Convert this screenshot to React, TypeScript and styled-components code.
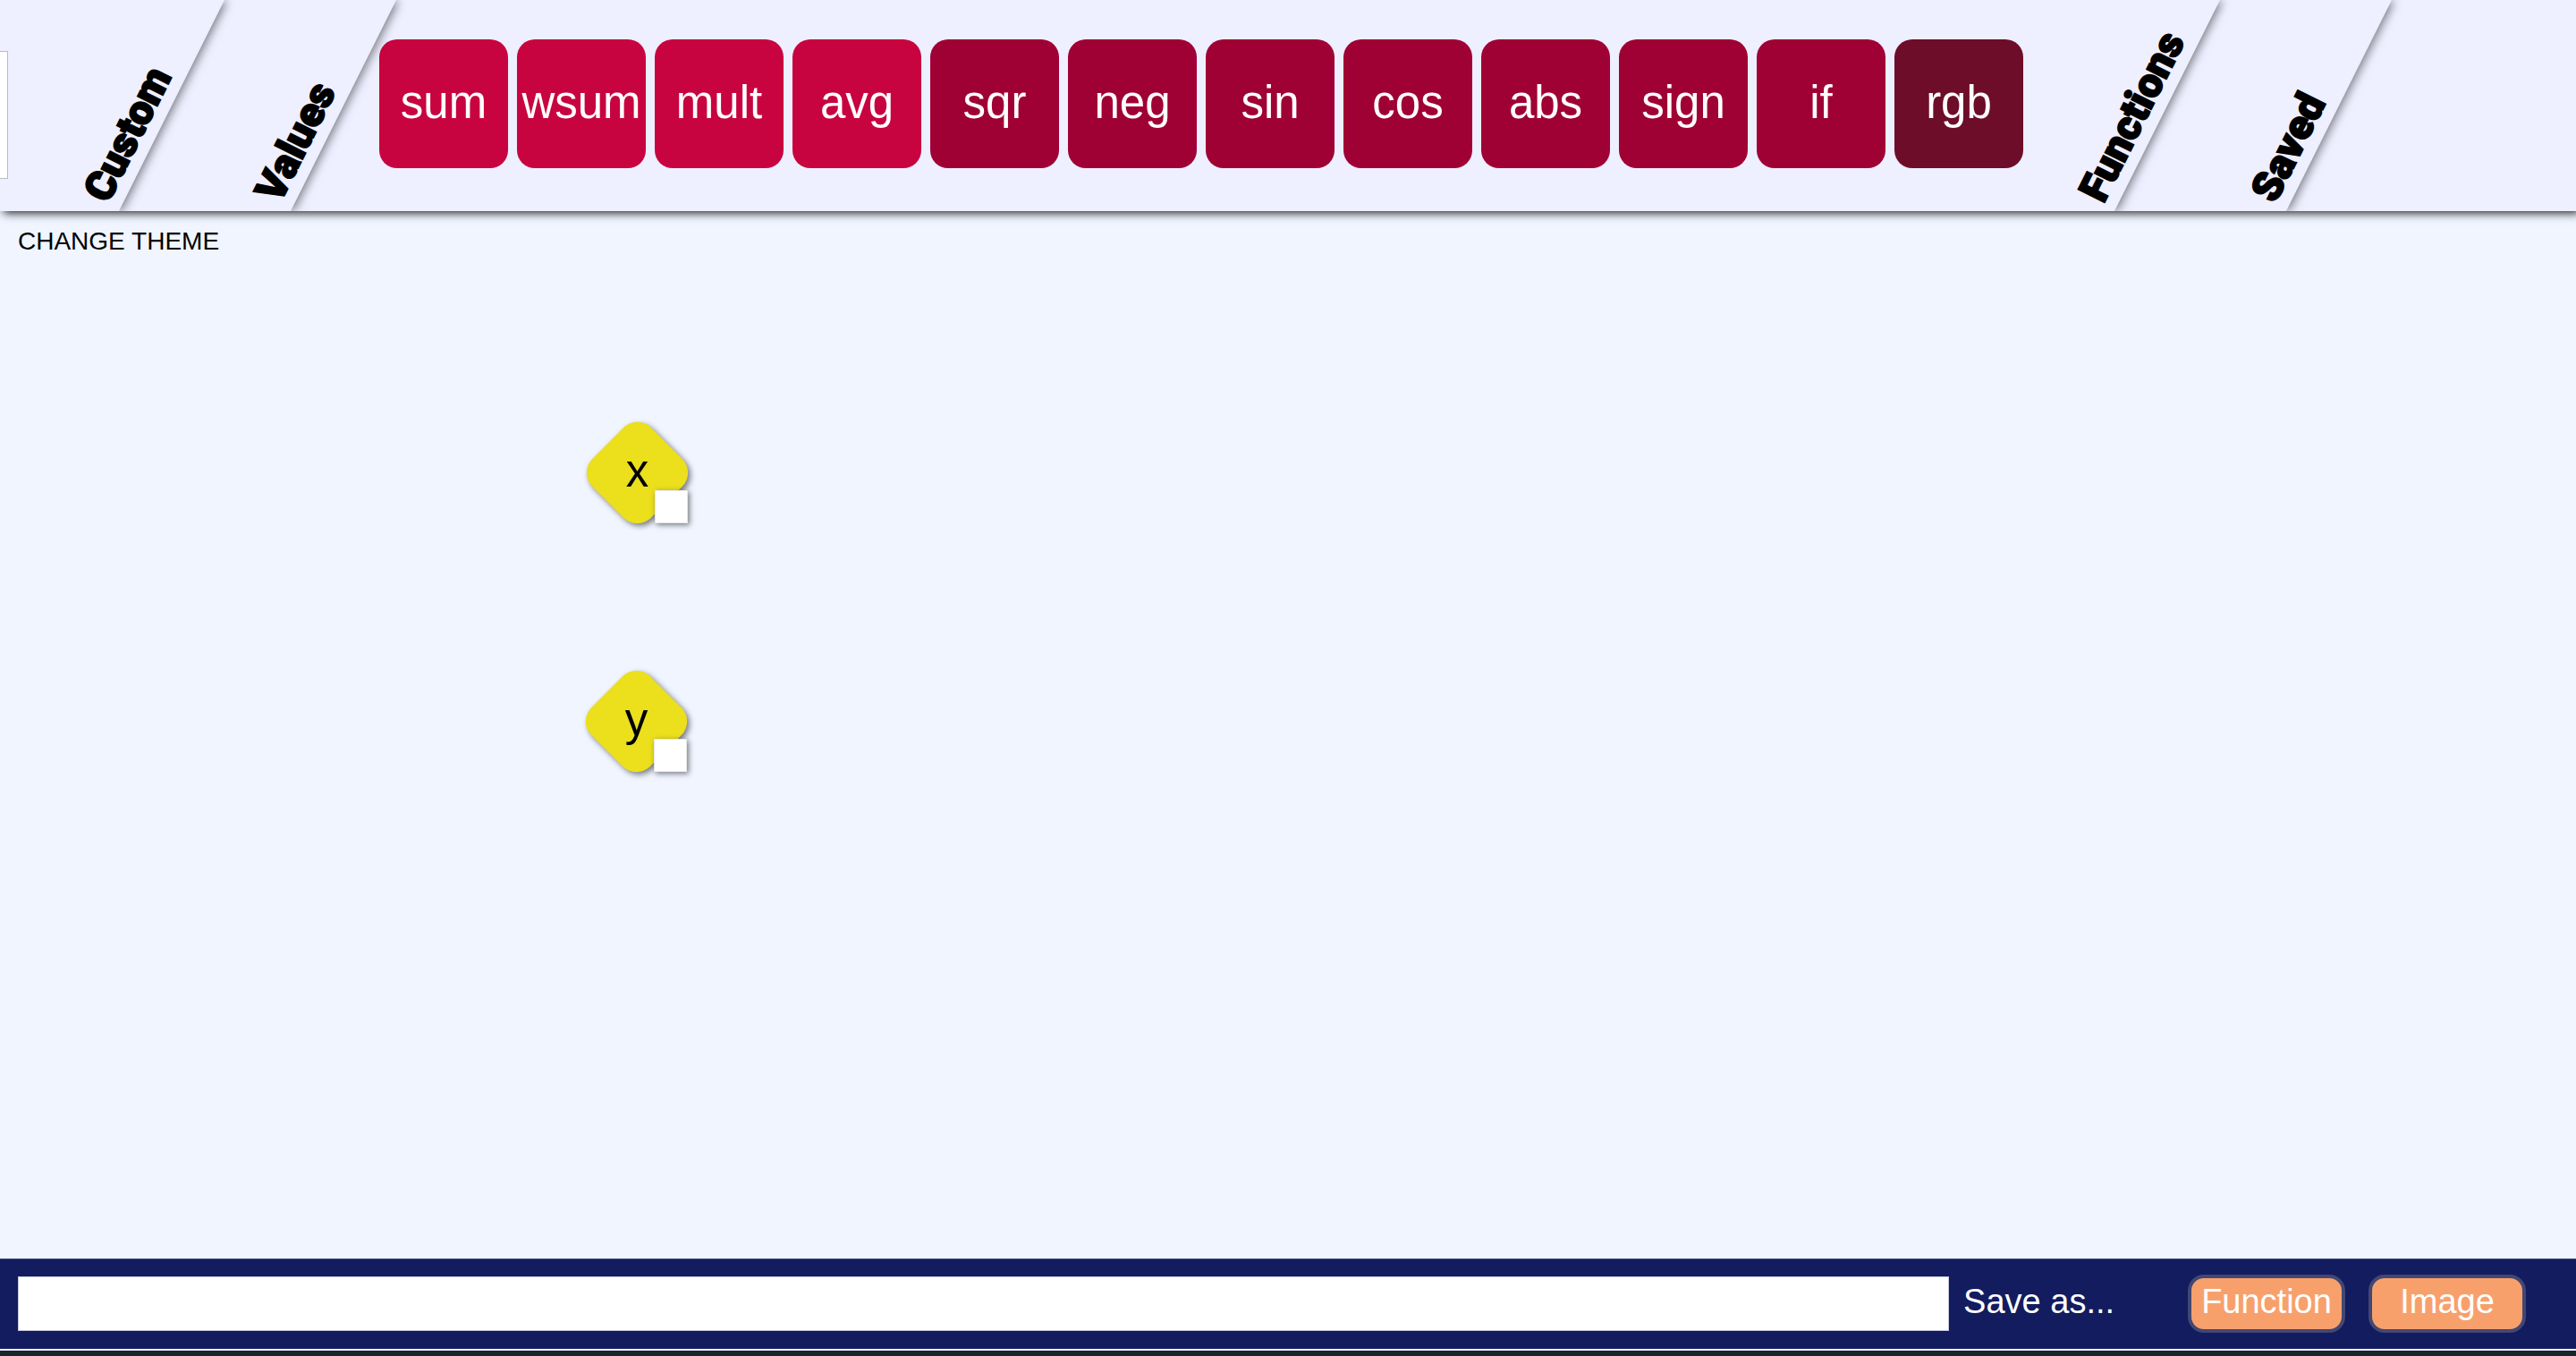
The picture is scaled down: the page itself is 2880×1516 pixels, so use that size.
import React from 'react';
import styled, { createGlobalStyle } from 'styled-components';

const GlobalStyle = createGlobalStyle`
  *, *::before, *::after { box-sizing: border-box; }
  body {
    margin: 0;
    background: #f0f5ff;
    color: #000;
    font-family: "Liberation Sans", Arial, sans-serif;
  }
  button, input { font: inherit; color: inherit; margin: 0; padding: 0; border: 0; }
  button { cursor: pointer; }
`;

const Page = styled.div`
  display: flex;
  flex-direction: column;
  min-height: 100vh;
`;

const Header = styled.header`
  position: relative;
  z-index: 1;
  background: #eeefff;
  box-shadow: 4px 2px 10px rgba(0, 0, 0, 0.9);
`;

const Drawers = styled.nav`
  display: flex;
  height: 236px;
  padding-right: 265px;
  overflow: hidden;
`;

const Drawer = styled.section<{ $order: number; $grow?: boolean }>`
  position: relative;
  z-index: ${(p) => p.$order};
  display: flex;
  flex: ${(p) => (p.$grow ? '1 1 0' : '0 0 192px')};
  min-width: 0;

  &::before {
    content: '';
    position: absolute;
    inset: 0 0 0 -120px;
    z-index: -1;
    background: #eeefff;
    box-shadow: 4px 0 10px -1px rgba(0, 0, 0, 0.5);
    transform: skewX(-26.565deg);
  }
`;

const DrawerLabel = styled.button`
  align-self: flex-end;
  width: 0;
  height: 48px;
  margin: 0 64px 4px auto;
  background: none;
  font-family: Impact, Roboto, "Liberation Sans", sans-serif;
  font-size: 46px;
  font-weight: 900;
  line-height: 48px;
  text-align: left;
  white-space: nowrap;
  -webkit-text-stroke: 2px #000;
  transform: rotate(-63.435deg);
  transform-origin: left bottom;
`;

const Preview = styled.div`
  width: 9px;
  height: 143px;
  margin-top: 57px;
  background: #fff;
  border: solid #bbb;
  border-width: 1px 1px 1px 0;
`;

const Tiles = styled.div`
  display: flex;
  gap: 10px;
  padding: 44px 0 0 40px;
`;

const Tile = styled.button<{ $color: string }>`
  width: 144px;
  height: 144px;
  padding-bottom: 4px;
  border-radius: 20px;
  background: ${(p) => p.$color};
  color: #fff;
  font-size: 51px;
`;

const Canvas = styled.main`
  position: relative;
  flex: 1;
`;

const ThemeButton = styled.button`
  margin: 16px 20px;
  background: none;
  font-size: 28px;
  line-height: 36px;
`;

const Node = styled.div<{ $x: number; $y: number }>`
  position: absolute;
  left: ${(p) => p.$x}px;
  top: ${(p) => p.$y}px;
  display: grid;
  place-items: center;
  width: 113px;
  height: 113px;
  padding-bottom: 4px;
  font-size: 51px;

  &::before {
    content: '';
    position: absolute;
    inset: 10px;
    z-index: -1;
    border-radius: 22px;
    background: #ecdf1c;
    box-shadow: 4px 0 6px rgba(0, 0, 0, 0.5);
    transform: rotate(45deg);
  }
`;

const Port = styled.div`
  position: absolute;
  right: 0;
  bottom: 0;
  width: 37px;
  height: 37px;
  background: #fff;
  border: 1px solid #e8e8e8;
  box-shadow: 2px 2px 6px rgba(0, 0, 0, 0.5);
`;

const Footer = styled.footer`
  border-bottom: 6px solid #1a252a;
`;

const SaveBar = styled.form`
  display: flex;
  align-items: center;
  height: 101px;
  margin-bottom: 2px;
  padding: 0 56px 2px 20px;
  border-top: 1px solid #424a80;
  background: #121c5e;
  color: #fff;
  font-size: 38px;
`;

const NameInput = styled.input`
  flex: 0 0 77%;
  width: 0;
  height: 61px;
  background: #fff;
  color: #000;
  && { border: 1px solid #c8c8dc; }
`;

const SaveLabel = styled.label`
  margin: 0 auto 0 16px;
  padding-bottom: 4px;
  white-space: nowrap;
`;

const SaveButton = styled.button`
  width: 176px;
  height: 65px;
  margin-left: 26px;
  padding-bottom: 4px;
  border: 4px solid #424773;
  border-radius: 18px;
  background: #f8a06c;
`;

const tiles = [
  { name: 'sum', color: '#c80440' },
  { name: 'wsum', color: '#c80440' },
  { name: 'mult', color: '#c80440' },
  { name: 'avg', color: '#c80440' },
  { name: 'sqr', color: '#a00134' },
  { name: 'neg', color: '#a00134' },
  { name: 'sin', color: '#a00134' },
  { name: 'cos', color: '#a00134' },
  { name: 'abs', color: '#a00134' },
  { name: 'sign', color: '#a00134' },
  { name: 'if', color: '#a00134' },
  { name: 'rgb', color: '#6d0d2a' },
];

export default function App() {
  return (
    <Page>
      <GlobalStyle />
      <Header>
        <Drawers>
          <Drawer $order={4}>
            <Preview />
            <DrawerLabel type="button">Custom</DrawerLabel>
          </Drawer>
          <Drawer $order={3}>
            <DrawerLabel type="button">Values</DrawerLabel>
          </Drawer>
          <Drawer $order={2} $grow>
            <Tiles>
              {tiles.map((t) => (
                <Tile key={t.name} type="button" $color={t.color}>
                  {t.name}
                </Tile>
              ))}
            </Tiles>
            <DrawerLabel type="button">Functions</DrawerLabel>
          </Drawer>
          <Drawer $order={1}>
            <DrawerLabel type="button">Saved</DrawerLabel>
          </Drawer>
        </Drawers>
      </Header>
      <Canvas>
        <ThemeButton type="button">CHANGE THEME</ThemeButton>
        <Node $x={656} $y={236}>
          x<Port />
        </Node>
        <Node $x={655} $y={514}>
          y<Port />
        </Node>
      </Canvas>
      <Footer>
        <SaveBar onSubmit={(e: React.FormEvent) => e.preventDefault()}>
          <NameInput id="save-name" type="text" />
          <SaveLabel htmlFor="save-name">Save as...</SaveLabel>
          <SaveButton type="submit">Function</SaveButton>
          <SaveButton type="submit">Image</SaveButton>
        </SaveBar>
      </Footer>
    </Page>
  );
}
